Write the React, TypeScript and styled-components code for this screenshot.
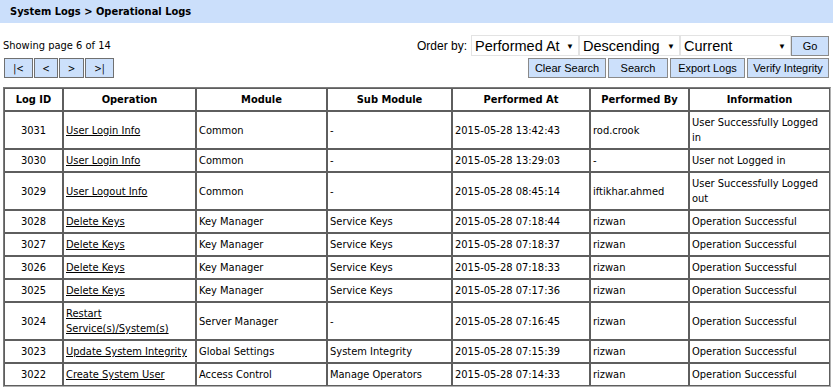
import React from 'react';
import styled, { createGlobalStyle } from 'styled-components';

const GlobalStyle = createGlobalStyle`
    body {
        margin: 0;
        background: #fff;
        font-family: "DejaVu Sans Condensed", "Liberation Sans", sans-serif;
        font-size: 11px;
        color: #000;
    }
`;

const TitleBar = styled.div`
    height: 23px;
    background: #cbdffb;
    display: flex;
    align-items: center;
    padding-left: 10px;
    font-weight: bold;
    font-size: 11px;
`;

const Content = styled.div`
    padding: 12px 4px 0 3px;
`;

const Controls = styled.div`
    display: flex;
    justify-content: space-between;
    align-items: flex-start;
    height: 52px;
`;

const LeftControls = styled.div`
    display: flex;
    flex-direction: column;
    gap: 6px;
    padding-top: 4px;
`;

const Pager = styled.div`
    display: flex;
    gap: 1px;
    padding-left: 1px;
`;

const PageButton = styled.button<{ $w: number }>`
    width: ${p => p.$w}px;
    height: 20px;
    background: #cce0fb;
    border: 1px solid #707070;
    font-family: inherit;
    font-size: 10px;
    padding: 0;
    cursor: pointer;
`;

const RightControls = styled.div`
    display: flex;
    flex-direction: column;
    align-items: flex-end;
    gap: 2px;
`;

const OrderRow = styled.div`
    display: flex;
    align-items: center;
`;

const OrderLabel = styled.span`
    font-family: "Liberation Sans", sans-serif;
    font-size: 12px;
    margin-right: 4px;
`;

const Select = styled.div<{ $w: number }>`
    width: ${p => p.$w}px;
    height: 21px;
    box-sizing: border-box;
    border: 1px solid #e3e3e3;
    display: flex;
    align-items: center;
    justify-content: space-between;
    padding: 0 4px 0 3px;
    font-family: "Liberation Sans", sans-serif;
    font-size: 14.5px;
    background: #fff;
`;

const Caret = styled.span`
    font-size: 8px;
    margin-top: 2px;
`;

const ActionButton = styled.button<{ $w: number }>`
    width: ${p => p.$w}px;
    height: 20px;
    background: #cce0fb;
    border: 1px solid #8a8a8a;
    font-family: "Liberation Sans", sans-serif;
    font-size: 11px;
    padding: 0;
    color: #000;
`;

const ButtonRow = styled.div`
    display: flex;
    gap: 2px;
`;

const Table = styled.table`
    width: 826px;
    border-collapse: separate;
    border-spacing: 0;
    border: 1px solid;
    border-color: #7a7a7a #b0b0b0 #b0b0b0 #7a7a7a;
    table-layout: fixed;
`;

const Th = styled.th`
    border: 1px solid #5e5e5e;
    height: 21px;
    padding: 0 3px;
    font-weight: bold;
    text-align: center;
    font-size: 11px;
`;

const Td = styled.td<{ $center?: boolean }>`
    border: 1px solid #5e5e5e;
    padding: 3px 2px;
    line-height: 15px;
    height: 15px;
    text-align: ${p => (p.$center ? 'center' : 'left')};
    vertical-align: middle;
`;

const OpLink = styled.a`
    color: #000;
    text-decoration: underline;
`;

const columns = [
    { label: 'Log ID', w: 59 },
    { label: 'Operation', w: 133 },
    { label: 'Module', w: 131 },
    { label: 'Sub Module', w: 125 },
    { label: 'Performed At', w: 138 },
    { label: 'Performed By', w: 99 },
    { label: 'Information', w: 141 },
];

const logs = [
    ['3031', 'User Login Info', 'Common', '-', '2015-05-28 13:42:43', 'rod.crook', 'User Successfully Logged in'],
    ['3030', 'User Login Info', 'Common', '-', '2015-05-28 13:29:03', '-', 'User not Logged in'],
    ['3029', 'User Logout Info', 'Common', '-', '2015-05-28 08:45:14', 'iftikhar.ahmed', 'User Successfully Logged out'],
    ['3028', 'Delete Keys', 'Key Manager', 'Service Keys', '2015-05-28 07:18:44', 'rizwan', 'Operation Successful'],
    ['3027', 'Delete Keys', 'Key Manager', 'Service Keys', '2015-05-28 07:18:37', 'rizwan', 'Operation Successful'],
    ['3026', 'Delete Keys', 'Key Manager', 'Service Keys', '2015-05-28 07:18:33', 'rizwan', 'Operation Successful'],
    ['3025', 'Delete Keys', 'Key Manager', 'Service Keys', '2015-05-28 07:17:36', 'rizwan', 'Operation Successful'],
    ['3024', 'Restart Service(s)/System(s)', 'Server Manager', '-', '2015-05-28 07:16:45', 'rizwan', 'Operation Successful'],
    ['3023', 'Update System Integrity', 'Global Settings', 'System Integrity', '2015-05-28 07:15:39', 'rizwan', 'Operation Successful'],
    ['3022', 'Create System User', 'Access Control', 'Manage Operators', '2015-05-28 07:14:33', 'rizwan', 'Operation Successful'],
];

const App = () => (
    <>
        <GlobalStyle />
        <TitleBar>System Logs &gt; Operational Logs</TitleBar>
        <Content>
            <Controls>
                <LeftControls>
                    <span>Showing page 6 of 14</span>
                    <Pager>
                        <PageButton $w={29}>|&lt;</PageButton>
                        <PageButton $w={24}>&lt;</PageButton>
                        <PageButton $w={25}>&gt;</PageButton>
                        <PageButton $w={29}>&gt;|</PageButton>
                    </Pager>
                </LeftControls>
                <RightControls>
                    <OrderRow>
                        <OrderLabel>Order by:</OrderLabel>
                        <Select $w={108}>Performed At <Caret>▼</Caret></Select>
                        <Select $w={101}>Descending <Caret>▼</Caret></Select>
                        <Select $w={111}>Current <Caret>▼</Caret></Select>
                        <ActionButton $w={38}>Go</ActionButton>
                    </OrderRow>
                    <ButtonRow>
                        <ActionButton $w={78}>Clear Search</ActionButton>
                        <ActionButton $w={60}>Search</ActionButton>
                        <ActionButton $w={75}>Export Logs</ActionButton>
                        <ActionButton $w={82}>Verify Integrity</ActionButton>
                    </ButtonRow>
                </RightControls>
            </Controls>
            <Table>
                <colgroup>
                    {columns.map(c => <col key={c.label} style={{ width: c.w }} />)}
                </colgroup>
                <thead>
                    <tr>
                        {columns.map(c => <Th key={c.label}>{c.label}</Th>)}
                    </tr>
                </thead>
                <tbody>
                    {logs.map(row => (
                        <tr key={row[0]}>
                            <Td $center>{row[0]}</Td>
                            <Td><OpLink href="#">{row[1]}</OpLink></Td>
                            {row.slice(2).map((cell, i) => <Td key={i}>{cell}</Td>)}
                        </tr>
                    ))}
                </tbody>
            </Table>
        </Content>
    </>
);

export default App;
